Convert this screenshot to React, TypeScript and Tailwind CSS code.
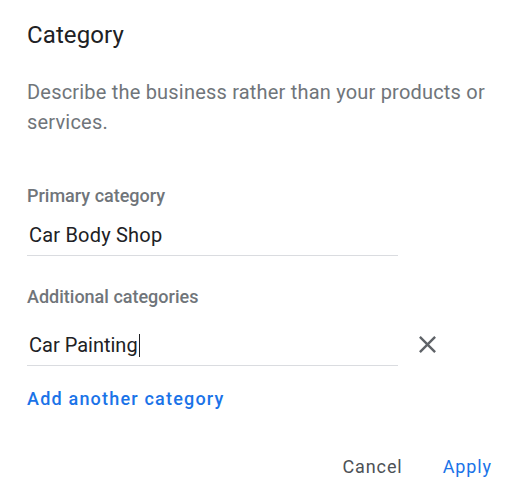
import React from 'react';

function CloseIcon() {
  return (
    <svg width="29" height="29" viewBox="0 0 24 24" className="text-[#5f6368]" fill="currentColor">
      <path d="M19 6.41L17.59 5 12 10.59 6.41 5 5 6.41 10.59 12 5 17.59 6.41 19 12 13.41 17.59 19 19 17.59 13.41 12z" />
    </svg>
  );
}

export default function App() {
  return (
    <div className="w-[512px] h-[493px] bg-white font-['Roboto','Liberation_Sans',sans-serif] pl-[27px] pr-[14px]">
      <h2 className="pt-[21px] text-[24px] leading-[28px] tracking-[0.1px] text-[#202124]">Category</h2>

      <p className="mt-[28px] text-[20px] leading-[30px] tracking-[0.01em] text-[#70757a]">
        Describe the business rather than your products or services.
      </p>

      {/* primary */}
      <div className="mt-[47px] w-[371px]">
        <div className="text-[18px] leading-[24px] font-medium text-[#70757a]">Primary category</div>
        <div className="mt-[15px] pb-[8px] pl-[2px] border-b border-[#dadce0] text-[20px] leading-[24px] tracking-[0.2px] text-[#202124]">
          Car Body Shop
        </div>
      </div>

      {/* additional */}
      <div className="mt-[29px]">
        <div className="text-[18px] leading-[24px] font-medium text-[#70757a]">Additional categories</div>
        <div className="mt-[24px] flex items-start">
          <div className="w-[371px] pb-[8px] pl-[2px] border-b border-[#dadce0] text-[20px] leading-[24px] text-[#202124] flex items-center">
            Car Painting
            <span className="inline-block w-px h-[23px] bg-[#202124] ml-px" />
          </div>
          <div className="ml-[15px] -mt-[3px] flex">
            <CloseIcon />
          </div>
        </div>
      </div>

      <div className="mt-[21px] text-[18px] leading-[24px] font-medium tracking-[1.2px] text-[#1a73e8]">
        Add another category
      </div>

      <div className="mt-[44px] flex justify-end items-center gap-[40px] pr-[6px]">
        <span className="text-[18px] leading-[24px] tracking-[0.9px] text-[#4d5156]">Cancel</span>
        <span className="text-[18px] leading-[24px] tracking-[0.9px] text-[#1a73e8]">Apply</span>
      </div>
    </div>
  );
}
